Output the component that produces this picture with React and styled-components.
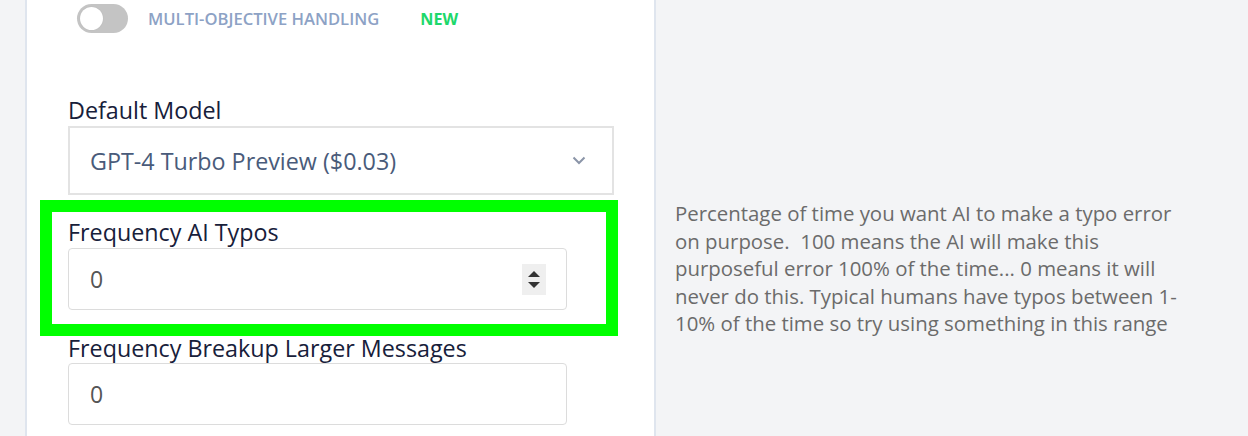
import React from 'react';
import styled, { createGlobalStyle } from 'styled-components';

const GlobalStyle = createGlobalStyle`
    html, body {
        margin: 0;
        padding: 0;
        background: #f3f4f6;
        font-family: 'Open Sans', 'Noto Sans', sans-serif;
    }
`;

const Page = styled.div`
    display: flex;
    height: 436px;
    overflow: hidden;
    padding-left: 25px;
`;

const Panel = styled.div`
    position: relative;
    width: 631px;
    flex-shrink: 0;
    background: #fff;
    border-left: 2px solid #dfe5ee;
    border-right: 2px solid #dfe5ee;
    padding: 4px 0 0 41px;
    box-sizing: border-box;
`;

const ToggleRow = styled.div`
    display: flex;
    align-items: center;
    height: 29px;
    margin-left: 9px;
`;

const Switch = styled.span`
    display: inline-block;
    position: relative;
    width: 51px;
    height: 29px;
    border-radius: 15px;
    background: #c4c4c4;
`;

const Knob = styled.span`
    position: absolute;
    top: 3px;
    left: 3px;
    width: 23px;
    height: 23px;
    border-radius: 50%;
    background: #fff;
    box-shadow: 0 0 1px #aaa;
`;

const ToggleLabel = styled.span`
    margin-left: 20px;
    font-size: 16.6px;
    font-weight: 600;
    color: #8da2c5;
`;

const NewTag = styled.span`
    margin-left: 41px;
    font-size: 16.2px;
    font-weight: 700;
    color: #1ed86b;
`;

const Field = styled.div`
    width: ${p => p.$width}px;
    margin-top: ${p => p.$top}px;
`;

const Label = styled.div`
    font-size: 23.3px;
    line-height: 28px;
    color: #17203a;
    margin-bottom: ${p => p.$gap || 2}px;
`;

const Select = styled.div`
    display: flex;
    align-items: center;
    justify-content: space-between;
    height: 69px;
    box-sizing: border-box;
    border: 2px solid #e3e3e3;
    padding: 0 26px 0 20px;
    font-size: 23.3px;
    color: #495b7a;
`;

const Box = styled.div`
    display: flex;
    align-items: center;
    height: 62px;
    box-sizing: border-box;
    border: 1px solid #dcdcdc;
    border-radius: 4px;
    padding: 0 20px 0 21px;
`;

const Value = styled.span`
    flex: 1;
    font-size: 23px;
    color: #555;
`;

const Spinner = styled.span`
    display: flex;
    flex-direction: column;
    align-items: center;
    justify-content: center;
    gap: 5px;
    width: 24px;
    height: 31px;
    background: #efefef;
`;

const Arrow = styled.span`
    width: 0;
    height: 0;
    border-left: 6px solid transparent;
    border-right: 6px solid transparent;
    ${p => (p.$up ? 'border-bottom: 6px solid #333;' : 'border-top: 6px solid #333;')}
`;

const Highlight = styled.div`
    position: absolute;
    left: 13px;
    top: 200px;
    width: 578px;
    height: 136px;
    box-sizing: border-box;
    border: 12px solid #00ff00;
    pointer-events: none;
`;

const Help = styled.p`
    margin: 200px 0 0 19px;
    width: 510px;
    font-size: 20.4px;
    line-height: 27.5px;
    color: #6b6b6b;
    white-space: pre-wrap;
`;

const Chevron = () => (
    <svg width="14" height="9" viewBox="0 0 14 9">
        <path d="M1.5 1.5 L7 7 L12.5 1.5" fill="none" stroke="#8b95a8" strokeWidth="2" />
    </svg>
);

const App = () => (
    <>
        <GlobalStyle />
        <Page>
            <Panel>
                <ToggleRow>
                    <Switch>
                        <Knob />
                    </Switch>
                    <ToggleLabel>MULTI-OBJECTIVE HANDLING</ToggleLabel>
                    <NewTag>NEW</NewTag>
                </ToggleRow>
                <Field $width={546} $top={63}>
                    <Label>Default Model</Label>
                    <Select>
                        <span>GPT-4 Turbo Preview ($0.03)</span>
                        <Chevron />
                    </Select>
                </Field>
                <Field $width={499} $top={23}>
                    <Label>Frequency AI Typos</Label>
                    <Box>
                        <Value>0</Value>
                        <Spinner>
                            <Arrow $up />
                            <Arrow />
                        </Spinner>
                    </Box>
                </Field>
                <Field $width={499} $top={24}>
                    <Label $gap={1}>Frequency Breakup Larger Messages</Label>
                    <Box>
                        <Value>0</Value>
                    </Box>
                </Field>
                <Highlight />
            </Panel>
            <Help>
                {'Percentage of time you want AI to make a typo error on purpose.  100 means the AI will make this purposeful error 100% of the time... 0 means it will never do this. Typical humans have typos between 1-10% of the time so try using something in this range'}
            </Help>
        </Page>
    </>
);

export default App;
